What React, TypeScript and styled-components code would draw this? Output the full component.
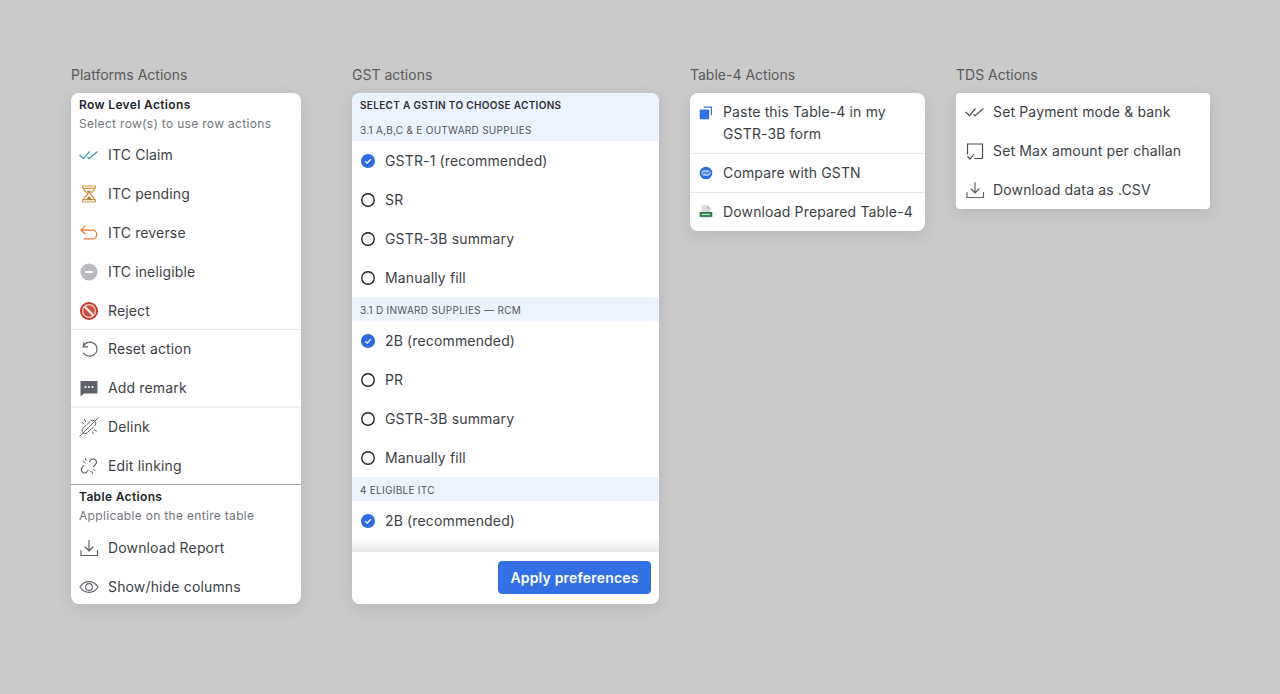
import React from "react";
import styled, { createGlobalStyle } from "styled-components";

const GlobalStyle = createGlobalStyle`
  html, body {
    margin: 0;
    padding: 0;
    background: #cacaca;
    font-family: Inter, "Liberation Sans", sans-serif;
  }
  * { box-sizing: border-box; }
`;

const Page = styled.div`
  display: flex;
  align-items: flex-start;
  width: 1280px;
  height: 694px;
  padding: 66px 0 0 71px;
  overflow: hidden;
  background: #cacaca;
`;

const Column = styled.section<{ $width: number; $gap: number }>`
  width: ${(p) => p.$width}px;
  margin-right: ${(p) => p.$gap}px;
  flex: none;
`;

const ColumnTitle = styled.h2`
  margin: 0 0 9px;
  font-size: 14px;
  line-height: 18px;
  font-weight: 400;
  letter-spacing: 0;
  color: #5a5a5c;
`;

const Card = styled.div<{ $radius?: number }>`
  background: #fff;
  border-radius: ${(p) => p.$radius ?? 8}px;
  box-shadow: 0 4px 16px rgba(0, 0, 0, 0.1);
  overflow: hidden;
`;

const PlatformCard = styled(Card)`
  height: 511px;
`;

const GroupHead = styled.div<{ $height: number }>`
  padding: 3px 8px 0;
  height: ${(p) => p.$height}px;
`;

const GroupTitle = styled.div`
  font-size: 12px;
  line-height: 18px;
  font-weight: 600;
  letter-spacing: 0.34px;
  color: #22252b;
`;

const GroupHint = styled.div`
  font-size: 12px;
  line-height: 18px;
  margin-top: 1px;
  letter-spacing: 0.32px;
  color: #73757c;
`;

const Row = styled.div<{ $indent: number; $iconWidth: number; $height?: number }>`
  display: flex;
  align-items: center;
  height: ${(p) => p.$height ?? 39}px;
  padding: 0 8px 0 ${(p) => p.$indent}px;
  font-size: 14px;
  line-height: 22px;
  letter-spacing: 0.15px;
  color: #3c3f46;
  svg { flex: none; width: ${(p) => p.$iconWidth}px; display: block; }
`;

const TallRow = styled.div`
  display: flex;
  align-items: flex-start;
  padding: 8px 8px 8px 7px;
  font-size: 14px;
  line-height: 22px;
  letter-spacing: 0.15px;
  color: #3c3f46;
  svg { flex: none; width: 18px; display: block; margin-top: 2px; }
`;

const RowLabel = styled.span<{ $gap: number }>`
  margin-left: ${(p) => p.$gap}px;
`;

const Rule = styled.div<{ $height: number; $color: string; $pull: number }>`
  height: ${(p) => p.$height}px;
  margin-top: -1px;
  margin-bottom: -${(p) => p.$pull}px;
  background: ${(p) => p.$color};
`;

const GstCard = styled(Card)`
  display: flex;
  flex-direction: column;
  height: 511px;
`;

const ScrollArea = styled.div`
  flex: 1;
  overflow: hidden;
  position: relative;
`;

const FadeShade = styled.div`
  position: absolute;
  left: 0;
  right: 0;
  bottom: 0;
  height: 14px;
  background: linear-gradient(to bottom, rgba(255, 255, 255, 0), rgba(0, 0, 0, 0.09));
`;

const GstHead = styled.div`
  background: #ebf3fe;
  padding: 5px 8px 0;
  height: 24px;
  font-size: 10px;
  line-height: 14px;
  font-weight: 600;
  letter-spacing: 0.32px;
  color: #2b2e35;
`;

const SectionHead = styled.div`
  background: #ebf3fe;
  height: 24px;
  padding: 1px 0 0 8px;
  font-size: 10px;
  line-height: 24px;
  letter-spacing: 0.28px;
  color: #52555c;
`;

const Footer = styled.div`
  display: flex;
  justify-content: flex-end;
  align-items: flex-start;
  height: 52px;
  padding: 9px 8px 0 0;
  background: #fff;
`;

const ApplyButton = styled.button`
  width: 153px;
  height: 33px;
  padding: 0;
  border: 1px solid #2f6ce0;
  border-radius: 4px;
  background: #3370e6;
  color: #fff;
  font-family: inherit;
  font-size: 14px;
  font-weight: 600;
  letter-spacing: 0.18px;
`;

const Separator = styled.div`
  height: 1px;
  margin-bottom: -1px;
  background: #e9e9eb;
`;

const Svg = ({ children, size = 20 }: { children: React.ReactNode; size?: number }) => (
  <svg viewBox="0 0 20 20" width={size} height={size} fill="none">
    {children}
  </svg>
);

const DoubleCheck = ({ color }: { color: string }) => (
  <Svg>
    <path d="M0.500 10l4 3.700L10.500 6.500" stroke={color} strokeWidth="1.200" />
    <path d="M8.500 12.200l1.600 1.500L18.500 6.500" stroke={color} strokeWidth="1.200" />
  </Svg>
);

const Hourglass = () => (
  <Svg>
    <rect x="3.500" y="2" width="13" height="2.400" rx="0.800" stroke="#cf933f" strokeWidth="1.100" />
    <rect x="3.500" y="15.600" width="13" height="2.400" rx="0.800" stroke="#cf933f" strokeWidth="1.100" />
    <path d="M5 4.500v1.500L9 10l-4 4v1.500M15 4.500v1.500L11 10l4 4v1.500" stroke="#cf933f" strokeWidth="1.200" />
    <path d="M7 15.500l3-3.500 3 3.500zM7.500 6.800h5L10 9.500z" fill="#a9803f" />
  </Svg>
);

const ReverseArrow = () => (
  <Svg>
    <path d="M6 3.200L2 7.200l4 3.600M2.400 7.200h11a4 4 0 010 8.600H5" stroke="#e8742f" strokeWidth="1.200" strokeLinecap="round" />
  </Svg>
);

const Ineligible = () => (
  <Svg>
    <circle cx="10" cy="10" r="8.600" fill="#b8bac0" />
    <rect x="5.800" y="9" width="8.400" height="2" rx="1" fill="#fff" />
  </Svg>
);

const RejectIcon = () => (
  <Svg>
    <circle cx="10" cy="10" r="9" fill="#c23a2b" />
    <circle cx="10" cy="10" r="7" fill="#f6d8d3" />
    <circle cx="10" cy="10" r="5.800" fill="#c9503f" />
    <path d="M5.900 5.900l8.200 8.200" stroke="#f8e6e3" strokeWidth="2.200" />
  </Svg>
);

const ResetIcon = () => (
  <Svg>
    <path d="M5 3.500L4.200 8l4.400-.4" stroke="#5f6269" strokeWidth="1.200" strokeLinecap="round" />
    <path d="M4.400 7.800A7 7 0 1110 17a7 7 0 01-5.600-2.800" stroke="#5f6269" strokeWidth="1.200" strokeLinecap="round" />
  </Svg>
);

const RemarkIcon = () => (
  <Svg>
    <path d="M1.500 3h17v12.500H5L1.500 18.500z" fill="#5f6269" />
    <circle cx="6.500" cy="9" r="1" fill="#fff" />
    <circle cx="10" cy="9" r="1" fill="#fff" />
    <circle cx="13.500" cy="9" r="1" fill="#fff" />
  </Svg>
);

const DelinkIcon = () => (
  <Svg>
    <path d="M8 7.500l3.500-3.400a3.100 3.100 0 014.400 4.400L12.500 12M11.500 12.500L8.300 15.800a3.100 3.100 0 01-4.400-4.400L7 8.300" stroke="#5f6269" strokeWidth="1" strokeLinecap="round" strokeDasharray="4 1.500" />
    <path d="M0.500 19.500L19.500 0.500" stroke="#5f6269" strokeWidth="0.900" />
    <path d="M3 5.500l2 1M5.500 2.500l1 2M14.500 17l-1-2M17.500 14l-2-1" stroke="#5f6269" strokeWidth="1" strokeLinecap="round" />
  </Svg>
);

const EditLinkIcon = () => (
  <Svg>
    <path d="M10.500 5.500l1.700-1.800a3.200 3.200 0 014.500 4.500L14.500 10.500M9 14.500l-1.500 1.700a3.200 3.200 0 01-4.500-4.500L5 9.500" stroke="#5f6269" strokeWidth="1.100" strokeLinecap="round" />
    <path d="M4 5.500l2 1M6.500 2.500l.6 2M13.500 17.500l-.6-2M16 14.500l-2-1M11 15l.5.500" stroke="#5f6269" strokeWidth="1" strokeLinecap="round" />
  </Svg>
);

const DownloadIcon = () => (
  <Svg>
    <path d="M10 2.500V12.500M6 9l4 3.800L14 9" stroke="#5f6269" strokeWidth="1.200" strokeLinecap="round" />
    <path d="M2 12.500v5h16.500v-5" stroke="#5f6269" strokeWidth="1.200" strokeLinecap="round" />
  </Svg>
);

const EyeIcon = () => (
  <Svg>
    <path d="M1 10c2.200-3.600 5.300-5.400 9-5.400s6.800 1.800 9 5.400c-2.200 3.600-5.300 5.400-9 5.400S3.200 13.600 1 10z" stroke="#5f6269" strokeWidth="1.100" />
    <circle cx="10" cy="10" r="3.400" stroke="#5f6269" strokeWidth="1.100" />
  </Svg>
);

const ChallanIcon = () => (
  <Svg>
    <path d="M2.500 13.500V3h15v14.500H9.500" stroke="#4a4d54" strokeWidth="1.200" />
    <path d="M2.500 15.500l2.500 2.500 4-5" stroke="#4a4d54" strokeWidth="1.200" />
  </Svg>
);

const CopyIcon = () => (
  <Svg>
    <path d="M7.500 3.500h8.500v9" stroke="#3370e6" strokeWidth="1.400" />
    <rect x="3" y="6" width="10.500" height="11" rx="0.800" fill="#3370e6" />
  </Svg>
);

const GstnIcon = () => (
  <Svg>
    <circle cx="10" cy="10" r="7" fill="#2f6be0" />
    <ellipse cx="10" cy="10" rx="5.200" ry="3.200" fill="#a9c4f5" />
    <path d="M6 10.800l3-1.600 1.800 1.600 3.400-2" stroke="#2f6be0" strokeWidth="1.200" />
  </Svg>
);

const XlsxIcon = () => (
  <Svg>
    <path d="M5 2.500h6.500l3.500 3.500v4.500H5z" fill="#d9dbdd" />
    <path d="M11.500 2.500V6H15z" fill="#b4b7ba" />
    <rect x="3" y="10" width="14" height="5.500" fill="#2f7d4f" />
    <rect x="5.500" y="12" width="9" height="1.500" fill="#bfe0cc" />
    <rect x="5" y="15.500" width="10" height="1.500" fill="#e4e5e7" />
  </Svg>
);

const RadioOff = () => (
  <Svg size={16}>
    <circle cx="10" cy="10" r="7.800" stroke="#1d2026" strokeWidth="1.700" />
  </Svg>
);

const RadioOn = () => (
  <Svg size={16}>
    <circle cx="10" cy="10" r="8.800" fill="#2f6be0" />
    <path d="M6.500 10.200l2.500 2.400 4.500-4.800" stroke="#fff" strokeWidth="1.500" />
  </Svg>
);

const PlatformRow = ({ icon, label }: { icon: React.ReactNode; label: string }) => (
  <Row $indent={8} $iconWidth={20}>
    {icon}
    <RowLabel $gap={9}>{label}</RowLabel>
  </Row>
);

const RadioRow = ({ on, label }: { on?: boolean; label: string }) => (
  <Row $indent={8} $iconWidth={16}>
    {on ? <RadioOn /> : <RadioOff />}
    <RowLabel $gap={9}>{label}</RowLabel>
  </Row>
);

const TableRow = ({ icon, label }: { icon: React.ReactNode; label: string }) => (
  <Row $indent={7} $iconWidth={18}>
    {icon}
    <RowLabel $gap={8}>{label}</RowLabel>
  </Row>
);

const TdsRow = ({ icon, label }: { icon: React.ReactNode; label: string }) => (
  <Row $indent={9} $iconWidth={20} $height={38.67}>
    {icon}
    <RowLabel $gap={8}>{label}</RowLabel>
  </Row>
);

const App = () => {
  return (
    <Page>
      <GlobalStyle />
      <Column $width={230} $gap={51}>
        <ColumnTitle>Platforms Actions</ColumnTitle>
        <PlatformCard>
          <GroupHead $height={42}>
            <GroupTitle>Row Level Actions</GroupTitle>
            <GroupHint>Select row(s) to use row actions</GroupHint>
          </GroupHead>
          <PlatformRow icon={<DoubleCheck color="#3a9aa8" />} label="ITC Claim" />
          <PlatformRow icon={<Hourglass />} label="ITC pending" />
          <PlatformRow icon={<ReverseArrow />} label="ITC reverse" />
          <PlatformRow icon={<Ineligible />} label="ITC ineligible" />
          <PlatformRow icon={<RejectIcon />} label="Reject" />
          <Rule $height={1} $pull={1} $color="#ececee" />
          <PlatformRow icon={<ResetIcon />} label="Reset action" />
          <PlatformRow icon={<RemarkIcon />} label="Add remark" />
          <Rule $height={2} $pull={1} $color="#f1f1f2" />
          <PlatformRow icon={<DelinkIcon />} label="Delink" />
          <PlatformRow icon={<EditLinkIcon />} label="Edit linking" />
          <Rule $height={1} $pull={0} $color="#a9a9ab" />
          <GroupHead $height={43}>
            <GroupTitle>Table Actions</GroupTitle>
            <GroupHint>Applicable on the entire table</GroupHint>
          </GroupHead>
          <PlatformRow icon={<DownloadIcon />} label="Download Report" />
          <PlatformRow icon={<EyeIcon />} label="Show/hide columns" />
        </PlatformCard>
      </Column>

      <Column $width={307} $gap={31}>
        <ColumnTitle>GST actions</ColumnTitle>
        <GstCard>
          <ScrollArea>
            <GstHead>SELECT A GSTIN TO CHOOSE ACTIONS</GstHead>
            <SectionHead>3.1 A,B,C &amp; E OUTWARD SUPPLIES</SectionHead>
            <RadioRow on label="GSTR-1 (recommended)" />
            <RadioRow label="SR" />
            <RadioRow label="GSTR-3B summary" />
            <RadioRow label="Manually fill" />
            <SectionHead>3.1 D INWARD SUPPLIES — RCM</SectionHead>
            <RadioRow on label="2B (recommended)" />
            <RadioRow label="PR" />
            <RadioRow label="GSTR-3B summary" />
            <RadioRow label="Manually fill" />
            <SectionHead>4 ELIGIBLE ITC</SectionHead>
            <RadioRow on label="2B (recommended)" />
            <FadeShade />
          </ScrollArea>
          <Footer>
            <ApplyButton>Apply preferences</ApplyButton>
          </Footer>
        </GstCard>
      </Column>

      <Column $width={235} $gap={31}>
        <ColumnTitle>Table-4 Actions</ColumnTitle>
        <Card>
          <TallRow>
            <CopyIcon />
            <RowLabel $gap={8}>
              Paste this Table-4 in my
              <br />
              GSTR-3B form
            </RowLabel>
          </TallRow>
          <Separator />
          <TableRow icon={<GstnIcon />} label="Compare with GSTN" />
          <Separator />
          <TableRow icon={<XlsxIcon />} label="Download Prepared Table-4" />
        </Card>
      </Column>

      <Column $width={254} $gap={0}>
        <ColumnTitle>TDS Actions</ColumnTitle>
        <Card $radius={4}>
          <TdsRow icon={<DoubleCheck color="#4a4d54" />} label="Set Payment mode & bank" />
          <TdsRow icon={<ChallanIcon />} label="Set Max amount per challan" />
          <TdsRow icon={<DownloadIcon />} label="Download data as .CSV" />
        </Card>
      </Column>
    </Page>
  );
};

export default App;
